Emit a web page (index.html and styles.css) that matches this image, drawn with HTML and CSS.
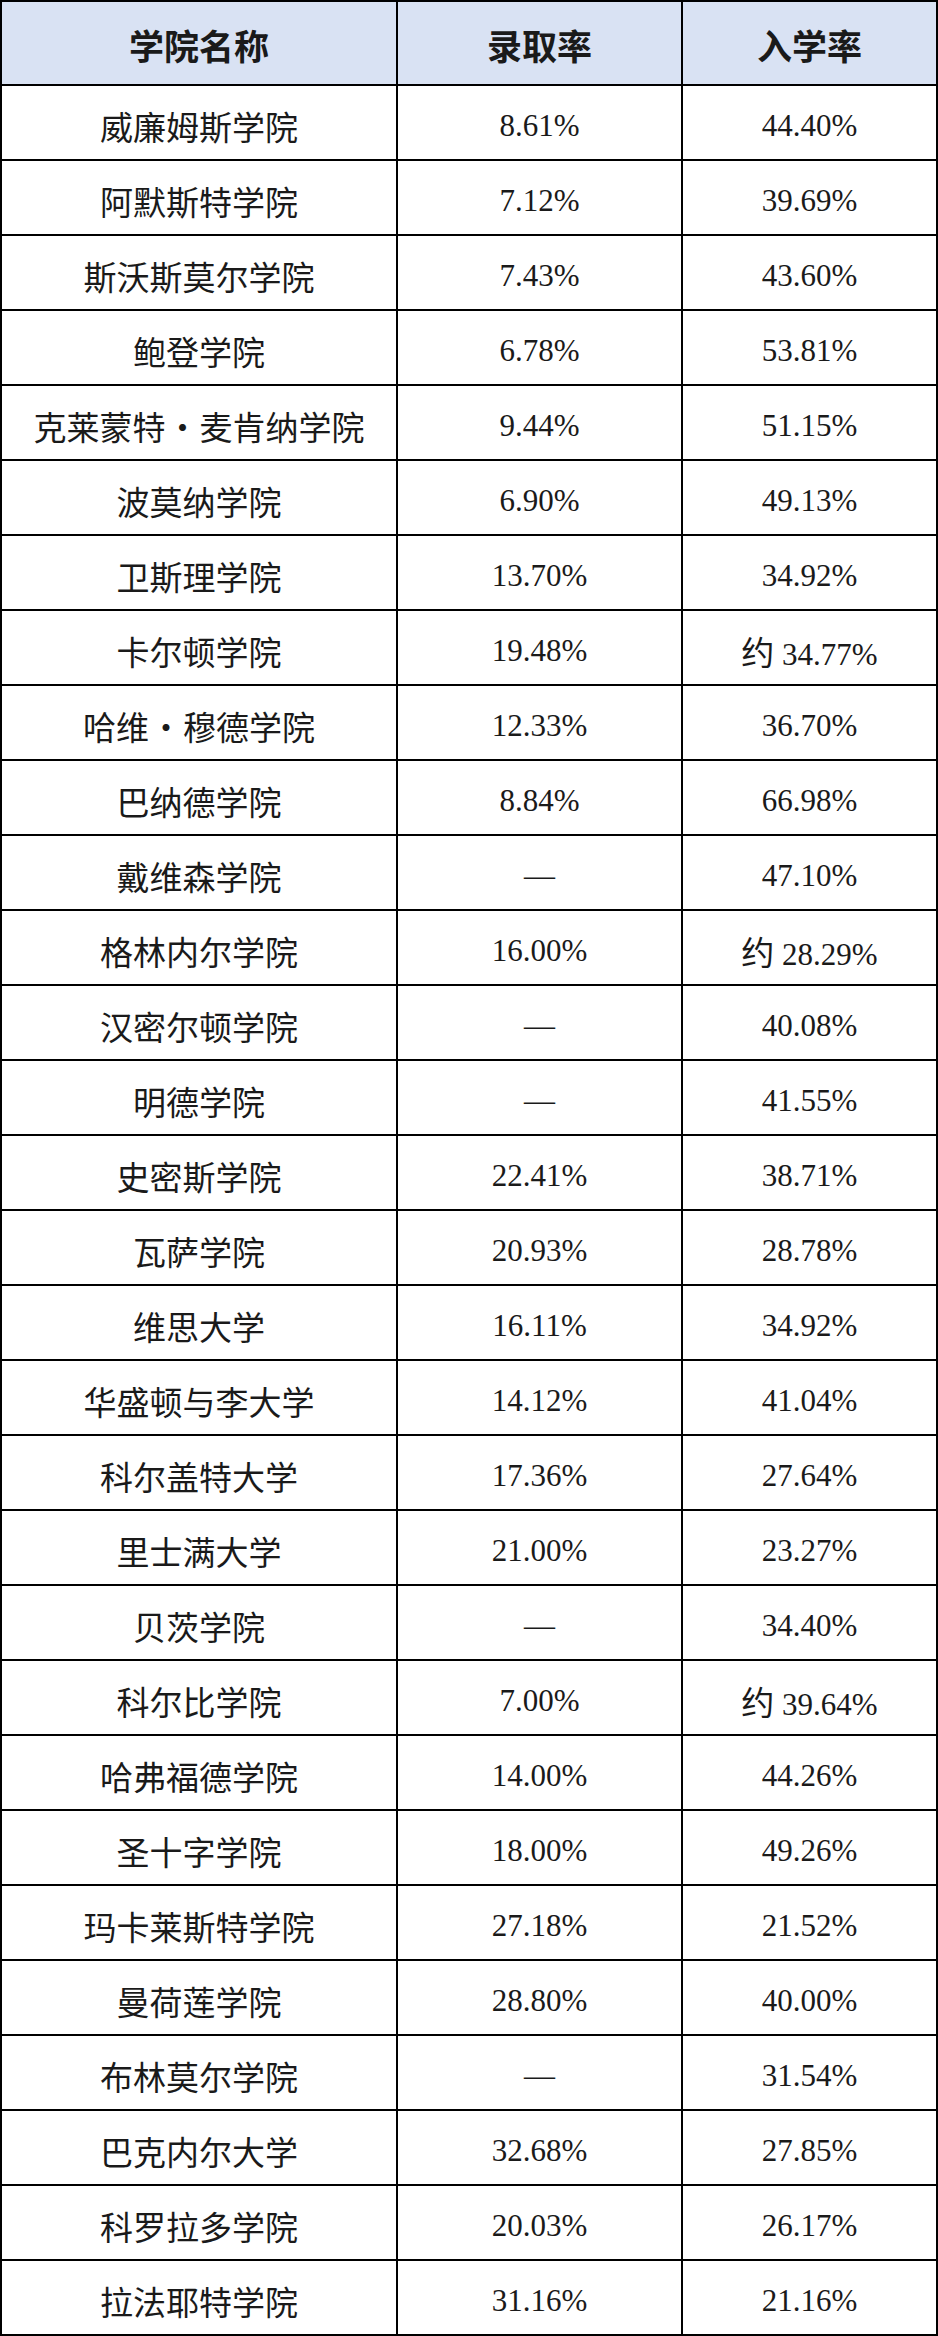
FILE: index.html
```html
<!DOCTYPE html>
<html lang="zh-CN">
<head>
<meta charset="utf-8">
<title>学院录取率与入学率</title>
<link rel="stylesheet" href="styles.css">
</head>
<body>
<div class="table">
  <div class="cell head">学院名称</div><div class="cell head">录取率</div><div class="cell head">入学率</div>
  <div class="cell name">威廉姆斯学院</div><div class="cell num">8.61%</div><div class="cell num">44.40%</div>
  <div class="cell name">阿默斯特学院</div><div class="cell num">7.12%</div><div class="cell num">39.69%</div>
  <div class="cell name">斯沃斯莫尔学院</div><div class="cell num">7.43%</div><div class="cell num">43.60%</div>
  <div class="cell name">鲍登学院</div><div class="cell num">6.78%</div><div class="cell num">53.81%</div>
  <div class="cell name">克莱蒙特 · 麦肯纳学院</div><div class="cell num">9.44%</div><div class="cell num">51.15%</div>
  <div class="cell name">波莫纳学院</div><div class="cell num">6.90%</div><div class="cell num">49.13%</div>
  <div class="cell name">卫斯理学院</div><div class="cell num">13.70%</div><div class="cell num">34.92%</div>
  <div class="cell name">卡尔顿学院</div><div class="cell num">19.48%</div><div class="cell num"><span><span class="zh">约</span> 34.77%</span></div>
  <div class="cell name">哈维 · 穆德学院</div><div class="cell num">12.33%</div><div class="cell num">36.70%</div>
  <div class="cell name">巴纳德学院</div><div class="cell num">8.84%</div><div class="cell num">66.98%</div>
  <div class="cell name">戴维森学院</div><div class="cell num">—</div><div class="cell num">47.10%</div>
  <div class="cell name">格林内尔学院</div><div class="cell num">16.00%</div><div class="cell num"><span><span class="zh">约</span> 28.29%</span></div>
  <div class="cell name">汉密尔顿学院</div><div class="cell num">—</div><div class="cell num">40.08%</div>
  <div class="cell name">明德学院</div><div class="cell num">—</div><div class="cell num">41.55%</div>
  <div class="cell name">史密斯学院</div><div class="cell num">22.41%</div><div class="cell num">38.71%</div>
  <div class="cell name">瓦萨学院</div><div class="cell num">20.93%</div><div class="cell num">28.78%</div>
  <div class="cell name">维思大学</div><div class="cell num">16.11%</div><div class="cell num">34.92%</div>
  <div class="cell name">华盛顿与李大学</div><div class="cell num">14.12%</div><div class="cell num">41.04%</div>
  <div class="cell name">科尔盖特大学</div><div class="cell num">17.36%</div><div class="cell num">27.64%</div>
  <div class="cell name">里士满大学</div><div class="cell num">21.00%</div><div class="cell num">23.27%</div>
  <div class="cell name">贝茨学院</div><div class="cell num">—</div><div class="cell num">34.40%</div>
  <div class="cell name">科尔比学院</div><div class="cell num">7.00%</div><div class="cell num"><span><span class="zh">约</span> 39.64%</span></div>
  <div class="cell name">哈弗福德学院</div><div class="cell num">14.00%</div><div class="cell num">44.26%</div>
  <div class="cell name">圣十字学院</div><div class="cell num">18.00%</div><div class="cell num">49.26%</div>
  <div class="cell name">玛卡莱斯特学院</div><div class="cell num">27.18%</div><div class="cell num">21.52%</div>
  <div class="cell name">曼荷莲学院</div><div class="cell num">28.80%</div><div class="cell num">40.00%</div>
  <div class="cell name">布林莫尔学院</div><div class="cell num">—</div><div class="cell num">31.54%</div>
  <div class="cell name">巴克内尔大学</div><div class="cell num">32.68%</div><div class="cell num">27.85%</div>
  <div class="cell name">科罗拉多学院</div><div class="cell num">20.03%</div><div class="cell num">26.17%</div>
  <div class="cell name">拉法耶特学院</div><div class="cell num">31.16%</div><div class="cell num">21.16%</div>
</div>
</body>
</html>
```

FILE: styles.css
```css
html, body {
  margin: 0;
  padding: 0;
  background: #ffffff;
}

.table {
  display: grid;
  grid-template-columns: 396px 285px 255px;
  grid-template-rows: 84px;
  grid-auto-rows: 75px;
  width: 938px;
  box-sizing: border-box;
  border-left: 2px solid #000;
  border-top: 2px solid #000;
  color: #1a1a1a;
}

.cell {
  display: flex;
  align-items: center;
  justify-content: center;
  box-sizing: border-box;
  border-right: 2px solid #000;
  border-bottom: 2px solid #000;
  white-space: nowrap;
}

.head {
  background: #d9e2f3;
  font-family: "Noto Sans CJK SC", sans-serif;
  font-weight: 700;
  font-size: 35px;
  padding-top: 2px;
}

.name {
  font-family: "Noto Sans CJK SC", sans-serif;
  font-size: 33px;
  padding-top: 6px;
  word-spacing: -7px;
}

.num {
  font-family: "Liberation Serif", "Noto Sans CJK SC", serif;
  font-size: 31px;
  padding-top: 7px;
}

.zh {
  font-family: "Noto Sans CJK SC", sans-serif;
  font-size: 33px;
}
```
